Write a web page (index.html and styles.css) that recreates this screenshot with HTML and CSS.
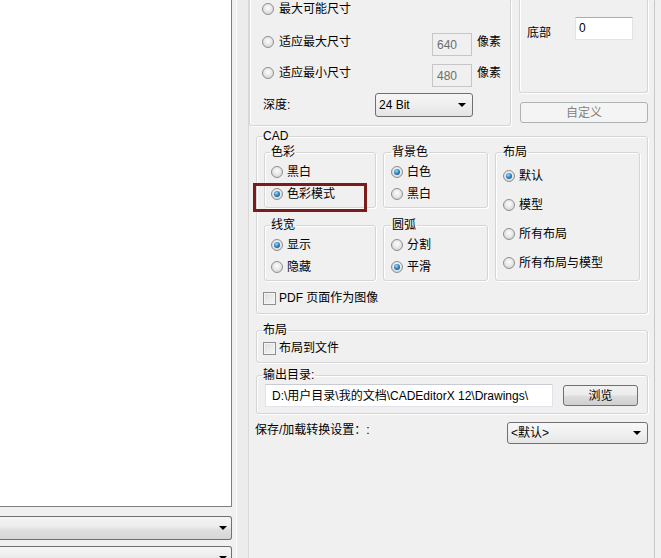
FILE: index.html
```html
<!DOCTYPE html>
<html lang="zh-CN">
<head>
<meta charset="utf-8">
<title>CAD 导出设置</title>
<link rel="stylesheet" href="styles.css">
</head>
<body>
<div class="app">
  <div class="left">
    <div class="canvas"></div>
    <div class="combo c1"><span class="arrow"></span></div>
    <div class="combo c2"><span class="arrow"></span></div>
  </div>
  <div class="split"></div>
  <div class="panel">
    <div class="top">
      <div class="gb gbA">
        <div class="row r1"><span class="radio"></span><span class="lbl">最大可能尺寸</span></div>
        <div class="row r2"><span class="radio"></span><span class="lbl wide">适应最大尺寸</span><span class="tb dis">640</span><span class="unit">像素</span></div>
        <div class="row r3"><span class="radio"></span><span class="lbl wide">适应最小尺寸</span><span class="tb dis">480</span><span class="unit">像素</span></div>
        <div class="row r4"><span class="depth">深度:</span><div class="select sel24"><span>24 Bit</span><span class="arrow"></span></div></div>
      </div>
      <div class="colB">
        <div class="gb gbB">
          <div class="rowB"><span class="bottomlbl">底部</span><span class="tb white">0</span></div>
        </div>
        <div class="btn disabled custom">自定义</div>
      </div>
    </div>

    <fieldset class="fs cad">
      <legend>CAD</legend>
      <div class="grid">
        <fieldset class="fs sub narrow">
          <legend>色彩</legend>
          <div class="opt"><span class="radio"></span><span>黑白</span></div>
          <div class="opt"><span class="radio on"></span><span>色彩模式</span></div>
        </fieldset>
        <fieldset class="fs sub mid">
          <legend>背景色</legend>
          <div class="opt"><span class="radio on"></span><span>白色</span></div>
          <div class="opt"><span class="radio"></span><span>黑白</span></div>
        </fieldset>
        <fieldset class="fs sub layout">
          <legend>布局</legend>
          <div class="lopt"><span class="radio on"></span><span>默认</span></div>
          <div class="lopt"><span class="radio"></span><span>模型</span></div>
          <div class="lopt"><span class="radio"></span><span>所有布局</span></div>
          <div class="lopt"><span class="radio"></span><span>所有布局与模型</span></div>
        </fieldset>
        <fieldset class="fs sub narrow">
          <legend>线宽</legend>
          <div class="opt"><span class="radio on"></span><span>显示</span></div>
          <div class="opt"><span class="radio"></span><span>隐藏</span></div>
        </fieldset>
        <fieldset class="fs sub mid">
          <legend>圆弧</legend>
          <div class="opt"><span class="radio"></span><span>分割</span></div>
          <div class="opt"><span class="radio on"></span><span>平滑</span></div>
        </fieldset>
      </div>
      <div class="chkrow pdf"><span class="chk"></span><span>PDF 页面作为图像</span></div>
    </fieldset>

    <fieldset class="fs wide2 lay2">
      <legend>布局</legend>
      <div class="chkrow"><span class="chk"></span><span>布局到文件</span></div>
    </fieldset>

    <fieldset class="fs wide2 outdir">
      <legend>输出目录:</legend>
      <div class="dirrow">
        <span class="path">D:\用户目录\我的文档\CADEditorX 12\Drawings\</span>
        <span class="btn browse">浏览</span>
      </div>
    </fieldset>

    <div class="saverow">
      <span class="savelbl">保存/加载转换设置：:</span>
      <div class="select selDef"><span>&lt;默认&gt;</span><span class="arrow"></span></div>
    </div>
  </div>
  <div class="highlight"></div>
</div>
</body>
</html>
```
FILE: styles.css
```css
* { box-sizing: border-box; }
html, body { margin: 0; height: 100%; }
body {
  background: #f0f0f0;
  font: 12px/16px "Liberation Sans", "Noto Sans CJK SC", sans-serif;
  color: #000;
  overflow: hidden;
}
.app { display: flex; height: 558px; position: relative; }

/* left side */
.left { width: 232px; flex: none; }
.canvas {
  height: 507px;
  background: #fff;
  border-right: 1px solid #7f7f7f;
  border-bottom: 1px solid #7f7f7f;
}
.combo {
  height: 24px;
  border: 1px solid #707070;
  border-left: none;
  border-radius: 0 3px 3px 0;
  background: linear-gradient(#f5f5f5, #ececec 45%, #e0e0e0 55%, #d6d6d6);
  display: flex;
  align-items: center;
  justify-content: flex-end;
  padding-right: 4px;
}
.combo.c1 { margin-top: 9px; }
.combo.c2 { margin-top: 6px; }
.arrow {
  width: 0; height: 0;
  border-left: 4px solid transparent;
  border-right: 4px solid transparent;
  border-top: 4px solid #000;
}

.split {
  width: 16px; flex: none;
  background: linear-gradient(to right, #f0f0f0 4px, #fbfbfb 4px 5px, #ececec 5px);
}

/* right panel */
.panel {
  width: 407px; flex: none;
  border-left: 1px solid #d9d9d9;
  border-right: 1px solid #c9c9c9;
  background: #f0f0f0;
}
.top { display: flex; gap: 8px; }
.gb {
  border: 1px solid #d5d5d5;
  border-top: none;
  border-radius: 0 0 3px 3px;
  box-shadow: inset 1px 0 0 #fff, 1px 1px 0 #fff;
}
.gbA { width: 262px; padding: 0 0 8px 12px; }
.row { display: flex; align-items: center; }
.r1 { height: 18px; }
.r2 { height: 22px; margin-top: 13px; }
.r3 { height: 22px; margin-top: 9px; }
.r4 { height: 24px; margin-top: 9px; }
.gbA .radio { margin-right: 5px; }
.lbl.wide { width: 153px; }
.tb {
  height: 23px;
  width: 40px;
  padding: 3px 4px;
  line-height: 16px;
}
.tb.dis {
  align-self: flex-start;
  margin-top: 2px;
  border: 1px solid #c6c6c6;
  color: #6d6d6d;
  background: #f0f0f0;
}
.unit { margin-left: 5px; }
.depth { width: 112px; margin-left: 1px; }
.select {
  height: 24px;
  border: 1px solid #707070;
  border-radius: 3px;
  background: linear-gradient(#f6f6f6, #eeeeee 50%, #e4e4e4);
  display: flex;
  align-items: center;
  justify-content: space-between;
  padding: 0 6px 0 3px;
}
.sel24 { width: 98px; }

.colB { width: 129px; }
.gbB { padding: 17px 0 51px 7px; }
.rowB { display: flex; align-items: flex-start; }
.bottomlbl { width: 48px; margin-top: 8px; }
.tb.white {
  width: 58px;
  background: #fff;
  border: 1px solid #e2e3ea;
  border-top-color: #abadb3;
  padding: 2px 3px;
}
.btn {
  display: flex;
  align-items: center;
  justify-content: center;
  height: 21px;
  border: 1px solid #707070;
  border-radius: 3px;
  background: linear-gradient(#f2f2f2, #ebebeb 48%, #dddddd 52%, #cfcfcf);
}
.btn.disabled {
  border-color: #adb2b5;
  background: #f4f4f4;
  color: #838383;
}
.custom { width: 128px; margin: 9px 0 0 1px; }

/* fieldsets */
.fs {
  min-width: 0;
  border: 1px solid #d5d5d5;
  border-radius: 3px;
  box-shadow: inset 1px 1px 0 #fff, 1px 1px 0 #fff;
}
.fs > legend { padding: 0 1px; line-height: 16px; height: 16px; }
.fs.sub { margin: 0; }
.cad { width: 392px; margin: 2px 0 0 7px; padding: 0 6px 7px 5px; }
.grid {
  margin-left: 2px;
  display: grid;
  grid-template-columns: 112px 105px 145px;
  grid-template-rows: 64px 64px;
  column-gap: 7px;
  row-gap: 9px;
}
.sub.narrow { padding: 1px 4px 0 5px; }
.sub.mid { padding: 1px 4px 0 7px; }
.sub.layout { grid-column: 3; grid-row: 1 / span 2; padding: 2px 4px 0 6px; }
.opt { display: flex; align-items: center; height: 22px; }
.narrow .opt { padding-left: 1px; }
.lopt { display: flex; align-items: center; height: 29px; padding-left: 1px; }
.lopt:first-of-type { height: 28px; }
.radio {
  flex: none;
  width: 12px; height: 12px;
  border-radius: 50%;
  border: 1px solid #8e8f8f;
  background: radial-gradient(circle at 50% 40%, #fdfdfd, #e9e9e9 45%, #cfcfcf 90%);
  margin-right: 4px;
}
.radio.on::after {
  content: "";
  display: block;
  width: 6px; height: 6px;
  margin: 2px;
  border-radius: 50%;
  background: radial-gradient(circle at 40% 35%, #9fdcff, #2b7fc0 50%, #0d416e);
}
.chkrow { display: flex; align-items: center; height: 16px; padding-left: 1px; }
.pdf { margin-top: 9px; }
.chk {
  flex: none;
  width: 13px; height: 13px;
  border: 1px solid #8f8f8f;
  background: linear-gradient(135deg, #dcdcdc, #f8f8f8);
  box-shadow: inset 0 0 0 1px #f4f4f4;
  margin-right: 3px;
}
.wide2 { width: 392px; margin: 0 0 0 7px; padding: 0 6px 0 5px; }
.lay2 { margin-top: 8px; padding-top: 2px; padding-bottom: 6px; }
.outdir { margin-top: 4px; padding-top: 1px; padding-bottom: 6px; }
.dirrow { display: flex; align-items: center; height: 23px; }
.path {
  width: 288px; height: 23px;
  margin-left: 3px;
  background: #fff;
  border: 1px solid #e2e3ea;
  border-top-color: #c9cbd2;
  padding: 3px 6px;
  white-space: nowrap;
  overflow: hidden;
}
.browse { width: 75px; margin-left: 10px; }

.saverow {
  display: flex;
  align-items: flex-start;
  height: 22px;
  margin-top: 8px;
  padding-left: 6px;
}
.savelbl { line-height: 16px; }
.selDef { width: 141px; height: 22px; margin-left: auto; margin-right: 6px; background: linear-gradient(#f8f8f8, #f0f0f0 50%, #e6e6e6); }

.highlight {
  position: absolute;
  left: 253px; top: 183px;
  width: 114px; height: 29px;
  border: 3px solid #7b1b1b;
}
```
